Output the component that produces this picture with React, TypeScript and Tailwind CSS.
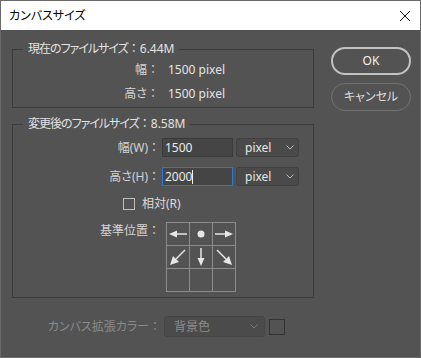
import React from "react";

const C = () => <span className="inline-block w-[12px] text-center [font-feature-settings:normal] tracking-normal">：</span>;

const Chevron = ({ color = "#b8b8b8" }: { color?: string }) => (
  <svg width="8" height="5" viewBox="0 0 8 5" className="shrink-0">
    <polyline points="0.5,0.5 4,4 7.5,0.5" fill="none" stroke={color} strokeWidth="1" />
  </svg>
);

const Cell = ({ kind }: { kind?: string }) => {
  const f = "#e6e6e6";
  let g: React.ReactNode = null;
  if (kind === "l")
    g = (
      <>
        <line x1="9" y1="11" x2="20" y2="11" stroke={f} strokeWidth="1.5" />
        <polygon points="2,11 10,7.5 10,14.5" fill={f} />
      </>
    );
  if (kind === "r")
    g = (
      <>
        <line x1="2" y1="11" x2="13" y2="11" stroke={f} strokeWidth="1.5" />
        <polygon points="20,11 12,7.5 12,14.5" fill={f} />
      </>
    );
  if (kind === "d") g = <circle cx="11" cy="11" r="3.5" fill={f} />;
  if (kind === "s")
    g = (
      <>
        <line x1="11" y1="2" x2="11" y2="13" stroke={f} strokeWidth="1.5" />
        <polygon points="7.5,12 14.5,12 11,20" fill={f} />
      </>
    );
  if (kind === "sw")
    g = (
      <>
        <line x1="18" y1="4" x2="9" y2="13" stroke={f} strokeWidth="1.5" />
        <polygon points="3,19 6,10 12,16" fill={f} />
      </>
    );
  if (kind === "se")
    g = (
      <>
        <line x1="4" y1="4" x2="13" y2="13" stroke={f} strokeWidth="1.5" />
        <polygon points="19,19 16,10 10,16" fill={f} />
      </>
    );
  return (
    <div className="w-[22px] h-[22px] bg-[#535353]">
      <svg width="22" height="22" viewBox="0 0 22 22">{g}</svg>
    </div>
  );
};

export default function App() {
  return (
    <div className="w-[421px] h-[358px] border border-[#6a6a6a] flex flex-col text-[12px] font-['Noto_Sans','Noto_Sans_CJK_JP',sans-serif] [font-feature-settings:'palt']">
      <div className="h-[29px] shrink-0 bg-white flex items-center justify-between pl-[8px] pr-[9px] text-black">
        <span className="leading-[16px]">カンバスサイズ</span>
        <svg width="12" height="12" viewBox="0 0 12 12">
          <line x1="1" y1="1" x2="11" y2="11" stroke="#111" strokeWidth="1" />
          <line x1="11" y1="1" x2="1" y2="11" stroke="#111" strokeWidth="1" />
        </svg>
      </div>
      <div className="flex-1 bg-[#535353] flex flex-col">
        <div className="flex">
          <div className="pl-[11px] w-[313px] shrink-0">
            <fieldset className="mt-[11px] border border-[#3b3b3b]">
              <legend className="ml-[10px] px-[5px] leading-[16px] text-[#e2e2e2]">
                <span className="tracking-[-1px]">現在のファイルサイズ</span><C />6.44M
              </legend>
              <div className="pt-[4px] pb-[4px] flex flex-col gap-[6px]">
                <div className="flex h-[18px] items-center leading-[16px]">
                  <span className="w-[146px] text-right text-[#d4d4d4]">幅<C /></span>
                  <span className="ml-[9px] text-[#e4e4e4]">1500 pixel</span>
                </div>
                <div className="flex h-[18px] items-center leading-[16px]">
                  <span className="w-[146px] text-right text-[#d4d4d4]">高さ<C /></span>
                  <span className="ml-[9px] text-[#e4e4e4]">1500 pixel</span>
                </div>
              </div>
            </fieldset>
            <fieldset className="mt-[8px] border border-[#3b3b3b]">
              <legend className="ml-[10px] px-[5px] leading-[16px] text-[#e2e2e2]">
                <span className="tracking-[-1px]">変更後のファイルサイズ</span><C />8.58M
              </legend>
              <div className="pt-[6px] pb-[5px] flex flex-col gap-[10px]">
                <div className="flex h-[19px] items-center">
                  <span className="w-[147px] text-right text-[#d4d4d4] leading-[16px]">幅(W)<C /></span>
                  <div className="ml-[2px] w-[71px] h-[19px] bg-[#454545] border border-[#3a3a3a] flex items-center pl-[2px] text-[#ececec] leading-[16px]">
                    1500
                  </div>
                  <div className="ml-[3px] w-[63px] h-[19px] bg-[#4a4a4a] border border-[#404040] rounded-[3px] flex items-center justify-between pl-[8px] pr-[4px] text-[#e6e6e6] leading-[16px]">
                    <span>pixel</span>
                    <Chevron />
                  </div>
                </div>
                <div className="flex h-[19px] items-center">
                  <span className="w-[147px] text-right text-[#d4d4d4] leading-[16px]">高さ(H)<C /></span>
                  <div className="ml-[2px] w-[71px] h-[19px] bg-[#454545] border border-[#2a78d6] flex items-center pl-[2px] text-[#ececec] leading-[16px]">
                    2000<span className="inline-block w-px h-[14px] bg-[#f0f0f0]" />
                  </div>
                  <div className="ml-[3px] w-[63px] h-[19px] bg-[#4a4a4a] border border-[#404040] rounded-[3px] flex items-center justify-between pl-[8px] pr-[4px] text-[#e6e6e6] leading-[16px]">
                    <span>pixel</span>
                    <Chevron />
                  </div>
                </div>
                <div className="flex h-[16px] items-center pl-[110px]">
                  <div className="w-[12px] h-[12px] border border-[#bdbdbd]" />
                  <span className="ml-[7px] text-[#dcdcdc] leading-[16px]">相対(R)</span>
                </div>
                <div className="flex items-start">
                  <span className="w-[147px] text-right text-[#d4d4d4] leading-[16px] mt-[1px]">基準位置<C /></span>
                  <div className="ml-[6px] grid grid-cols-3 gap-px p-px bg-[#8c8c8c] w-[70px]">
                    <Cell kind="l" />
                    <Cell kind="d" />
                    <Cell kind="r" />
                    <Cell kind="sw" />
                    <Cell kind="s" />
                    <Cell kind="se" />
                    <Cell />
                    <Cell />
                    <Cell />
                  </div>
                </div>
              </div>
            </fieldset>
          </div>
          <div className="ml-[17px] pt-[17px] flex flex-col gap-[8px]">
            <div className="w-[80px] h-[28px] rounded-full border-2 border-[#c2c2c2] flex items-center justify-center text-[#f2f2f2] leading-[16px]">
              OK
            </div>
            <div className="w-[80px] h-[28px] rounded-full border-[1.5px] border-[#727272] flex items-center justify-center text-[#dcdcdc] leading-[16px]">
              キャンセル
            </div>
          </div>
        </div>
        <div className="flex items-center mt-[18px] pl-[11px]">
          <span className="w-[149px] text-right text-[#8a8a8a] leading-[16px]">カンバス拡張カラー<C /></span>
          <div className="ml-[3px] w-[101px] h-[21px] bg-[#4b4b4b] border border-[#454545] rounded-[3px] flex items-center justify-between pl-[9px] pr-[6px] text-[#8c8c8c] leading-[16px]">
            <span>背景色</span>
            <Chevron color="#777" />
          </div>
          <div className="ml-[4px] w-[16px] h-[16px] border border-[#333333]" />
        </div>
      </div>
    </div>
  );
}
